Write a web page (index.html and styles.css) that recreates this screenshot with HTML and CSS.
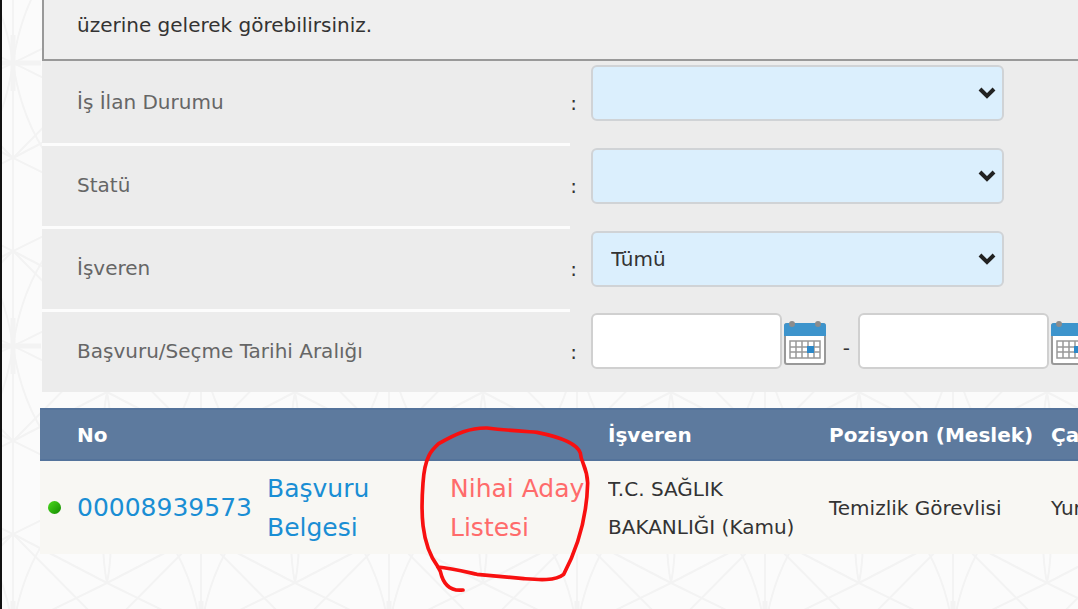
FILE: index.html
```html
<!DOCTYPE html>
<html lang="tr">

<head>
    <meta charset="UTF-8">
    <meta name="viewport" content="width=device-width, initial-scale=1.0">
    <title>İş İlanları</title>
    <link rel="stylesheet" href="styles.css">
</head>

<body>
    <svg class="pattern" aria-hidden="true">
        <defs>
            <pattern id="star" x="11" y="63" width="188" height="283" patternUnits="userSpaceOnUse">
                <g fill="none" stroke="#f3f3f3" stroke-width="2">
                    <path d="M0 0V283M188 0V283" />
                    <path d="M0 95L94 46L188 95M0 188L94 237L188 188" />
                    <path d="M0 95L188 188M0 188L188 95" />
                    <path d="M0 188L94 283M188 188L94 283M0 95L94 0L188 95" />
                    <path d="M0 0Q8 55 36 95M188 0Q180 55 152 95M0 283Q8 228 36 188M188 283Q180 228 152 188" />
                    <path d="M94 142Q86 87 94 46Q102 87 94 142Q86 196 94 237Q102 196 94 142" />
                    <path d="M94 237L0 283M94 237L188 283M94 46L0 0M94 46L188 0" />
                </g>
                <path d="M0 0H28M160 0H188M0 283H28M160 283H188M66 142H122" stroke="#f3f3f3" stroke-width="5" />
                <path d="M0 0V28M188 0V28M0 255V283M188 255V283M94 114V170" stroke="#f3f3f3" stroke-width="5" />
            </pattern>
        </defs>
        <rect width="100%" height="100%" fill="url(#star)" />
    </svg>
    <div class="wrap">
        <div class="notice">
            <p>üzerine gelerek görebilirsiniz.</p>
        </div>
        <form class="filter">
            <div class="row">
                <label for="durum">İş İlan Durumu</label>
                <span class="colon">:</span>
                <div class="select">
                    <select id="durum">
                        <option></option>
                    </select>
                    <svg viewBox="0 0 18 12"><path d="M2 2L9 9L16 2" /></svg>
                </div>
            </div>
            <div class="row">
                <label for="statu">Statü</label>
                <span class="colon">:</span>
                <div class="select">
                    <select id="statu">
                        <option></option>
                    </select>
                    <svg viewBox="0 0 18 12"><path d="M2 2L9 9L16 2" /></svg>
                </div>
            </div>
            <div class="row">
                <label for="isveren">İşveren</label>
                <span class="colon">:</span>
                <div class="select">
                    <select id="isveren">
                        <option>Tümü</option>
                    </select>
                    <svg viewBox="0 0 18 12"><path d="M2 2L9 9L16 2" /></svg>
                </div>
            </div>
            <div class="row">
                <label for="tarih1">Başvuru/Seçme Tarihi Aralığı</label>
                <span class="colon">:</span>
                <div class="dates">
                    <input type="text" id="tarih1">
                    <button type="button" aria-label="Başlangıç tarihi seç">
                        <svg viewBox="0 0 42 44">
                            <g id="cal">
                                <rect x="1" y="3" width="40" height="40" rx="2" fill="#fff" stroke="#999" stroke-width="2" />
                                <path d="M0 15V5Q0 2 3 2H39Q42 2 42 5V15Z" fill="#3d94cc" />
                                <circle cx="8" cy="3" r="3" fill="#8c8c8c" />
                                <circle cx="34" cy="3" r="3" fill="#8c8c8c" />
                                <path d="M6 20H36V37H6ZM6 26H36M6 31H36M12 20V37M18 20V37M24 20V37M30 20V37" fill="none" stroke="#999" stroke-width="1.5" />
                                <rect x="23" y="25" width="7" height="7" fill="#2c88c8" />
                            </g>
                        </svg>
                    </button>
                    <span class="dash">-</span>
                    <input type="text" id="tarih2" aria-label="Bitiş tarihi">
                    <button type="button" aria-label="Bitiş tarihi seç">
                        <svg viewBox="0 0 42 44"><use href="#cal" /></svg>
                    </button>
                </div>
            </div>
        </form>
        <table id="table">
            <colgroup>
                <col class="c-dot">
                <col class="c-no">
                <col class="c-belge">
                <col class="c-liste">
                <col class="c-isveren">
                <col class="c-poz">
                <col>
            </colgroup>
            <thead>
                <tr>
                    <th></th>
                    <th>No</th>
                    <th></th>
                    <th></th>
                    <th>İşveren</th>
                    <th>Pozisyon (Meslek)</th>
                    <th>Çalışma Yeri</th>
                </tr>
            </thead>
            <tbody>
                <tr>
                    <td><span class="dot"></span></td>
                    <td><a href="#">00008939573</a></td>
                    <td><a href="#">Başvuru<br>Belgesi</a></td>
                    <td class="marked">
                        <a href="#" class="red">Nihai Aday<br>Listesi</a>
                        <svg class="circle" viewBox="80 70 531 519">
                            <path d="M218 571C185 575 160 560 150 515L142 500C90 430 92 330 98 250C103 170 125 150 145 132C200 100 240 84 290 85C350 92 400 95 440 98C500 110 560 130 570 160C572 190 590 200 592 250C590 330 570 430 520 524C495 545 440 540 400 537L260 524C220 515 180 505 142 502" />
                        </svg>
                    </td>
                    <td>T.C. SAĞLIK<br>BAKANLIĞI (Kamu)</td>
                    <td>Temizlik Görevlisi</td>
                    <td>Yurt İçi</td>
                </tr>
            </tbody>
        </table>
    </div>
</body>

</html>
```
FILE: styles.css
```css
* {
    margin: 0;
    padding: 0;
    box-sizing: border-box;
}

body {
    min-height: 100vh;
    border-left: 2px solid #111;
    background: #fbfbfb;
    font-family: "DejaVu Sans", sans-serif;
    font-size: 20px;
    color: #333;
    overflow: hidden;
}

a {
    text-decoration: none;
    color: #1a8ed4;
}

.pattern {
    position: absolute;
    left: 2px;
    top: 0;
    width: 100%;
    height: 100%;
    z-index: -1;
}

.wrap {
    padding-left: 38px;
}

.notice {
    margin-left: 2px;
    padding: 6px 33px 14px;
    border-left: 2px solid #999;
    border-bottom: 2px solid #999;
    background: #efefef;
    line-height: 39px;
}

.filter {
    margin-left: 2px;
    padding-top: 2px;
    background: #ececec;
}

.filter .row {
    display: flex;
    height: 83px;
}

.filter .row:last-child {
    height: 80px;
}

.filter label {
    flex: none;
    width: 51%;
    padding: 0 35px;
    line-height: 78px;
    color: #666;
    border-bottom: 3px solid #fcfcfc;
}

.filter .row:last-child label {
    border-bottom: none;
}

.colon {
    flex: none;
    width: 21px;
    line-height: 80px;
}

.select {
    position: relative;
    flex: 0 1 413px;
    height: 56px;
    margin-top: 2px;
}

.select select {
    width: 100%;
    height: 100%;
    padding: 0 18px;
    appearance: none;
    border: 2px solid #d0d3d6;
    border-radius: 6px;
    background: #dbeffd;
    font: inherit;
    color: #333;
}

.select svg {
    position: absolute;
    right: 8px;
    top: 22px;
    width: 18px;
    height: 12px;
    fill: none;
    stroke: #222;
    stroke-width: 4;
    pointer-events: none;
}

.dates {
    display: flex;
    align-items: flex-start;
    padding-top: 1px;
}

.dates input {
    flex: none;
    width: 191px;
    height: 56px;
    padding: 0 18px;
    border: 2px solid #d0d0d0;
    border-radius: 6px;
    background: #fff;
    font: inherit;
}

.dates button {
    flex: none;
    width: 42px;
    height: 44px;
    margin: 8px 0 0 2px;
    border: none;
    background: none;
}

.dates svg {
    display: block;
    width: 42px;
    height: 44px;
}

.dash {
    flex: none;
    width: 32px;
    line-height: 70px;
    text-align: center;
    padding-left: 8px;
}

#table {
    width: 120%;
    margin-top: 16px;
    table-layout: fixed;
    border-spacing: 0;
    text-align: left;
    white-space: nowrap;
}

.c-dot {
    width: 37px;
}

.c-no {
    width: 190px;
}

.c-belge {
    width: 183px;
}

.c-liste {
    width: 158px;
}

.c-isveren {
    width: 221px;
}

.c-poz {
    width: 222px;
}

#table th {
    height: 53px;
    background: #5d7a9e;
    border-top: 2px solid #54739b;
    border-bottom: 2px solid #54739b;
    color: #fff;
}

#table td {
    height: 93px;
    line-height: 38px;
    background: #f8f7f3;
}

#table td a {
    display: block;
    font-size: 25px;
    line-height: 39px;
}

#table td .red {
    color: #ff6b6b;
}

.dot {
    display: block;
    width: 13px;
    height: 13px;
    margin-left: 8px;
    border-radius: 50%;
    background: linear-gradient(135deg, #4ddb1e, #138a00);
}

#table .marked {
    position: relative;
}

/* hand drawn ring round the link */
.circle {
    position: absolute;
    left: -33px;
    top: -38px;
    width: 177px;
    height: 173px;
    fill: none;
    stroke: #f81010;
    stroke-width: 11;
    stroke-linecap: round;
    stroke-linejoin: round;
    pointer-events: none;
}
```
